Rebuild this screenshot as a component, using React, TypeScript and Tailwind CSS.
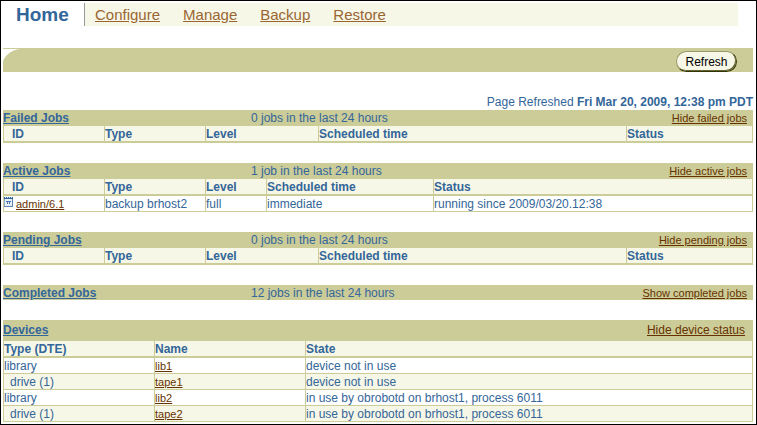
import type { ReactNode } from 'react'

type Column = {
  label: string
  width?: string
}

type SectionProps = {
  title: string
  summary?: string
  action: string
  large?: boolean
  children?: ReactNode
}

type DataTableProps = {
  label: string
  columns: Column[]
  indentFirst?: boolean
  rows?: ReactNode[][]
}

const NAV_ITEMS = ['Configure', 'Manage', 'Backup', 'Restore']

const JOB_COLUMNS: Column[] = [
  { label: 'ID', width: 'w-[100px]' },
  { label: 'Type', width: 'w-[100px]' },
  { label: 'Level', width: 'w-[112px]' },
  { label: 'Scheduled time', width: 'w-[307px]' },
  { label: 'Status' },
]

const ACTIVE_COLUMNS: Column[] = [
  { label: 'ID', width: 'w-[100px]' },
  { label: 'Type', width: 'w-[100px]' },
  { label: 'Level', width: 'w-[60px]' },
  { label: 'Scheduled time', width: 'w-[166px]' },
  { label: 'Status' },
]

const DEVICE_COLUMNS: Column[] = [
  { label: 'Type (DTE)', width: 'w-[150px]' },
  { label: 'Name', width: 'w-[150px]' },
  { label: 'State' },
]

const DEVICES = [
  { type: 'library', name: 'lib1', state: 'device not in use' },
  { type: 'drive (1)', name: 'tape1', state: 'device not in use' },
  { type: 'library', name: 'lib2', state: 'in use by obrobotd on brhost1, process 6011' },
  { type: 'drive (1)', name: 'tape2', state: 'in use by obrobotd on brhost1, process 6011' },
]

function SmallLink({ children }: { children: ReactNode }) {
  return (
    <a href="#" className="text-[11px] text-[#663300] underline">
      {children}
    </a>
  )
}

function JobIcon() {
  return (
    <svg width="9" height="11" viewBox="0 0 9 11" aria-hidden="true" shapeRendering="crispEdges">
      <path d="M0 0h9v10H0z" fill="#8fb0d4" />
      <path d="M0 0h9v2H0z" fill="#336699" />
      <path d="M1 0h1v1H1zM3 0h1v1H3zM5 0h1v1H5zM7 0h1v1H7z" fill="#cfe0f0" />
      <path d="M1 2h7v7H1z" fill="#e6eff8" />
      <path d="M2 4h5v1H2zM3 5h1v2H3zM5 5h1v2H5z" fill="#4a7ab0" />
      <path d="M8 2h1v8H0V9h8z" fill="#5f86b0" />
    </svg>
  )
}

function DataTable({ label, columns, indentFirst, rows = [] }: DataTableProps) {
  return (
    <table
      aria-label={label}
      className="w-full table-fixed border-separate border-spacing-px bg-[#cccc99] text-left text-xs leading-[14px]"
    >
      <thead>
        <tr>
          {columns.map((column, i) => (
            <th
              key={column.label}
              className={`h-4 border-b border-[#cccc99] bg-[#f7f7e7] p-0 pt-px font-bold ${column.width ?? ''} ${
                indentFirst && i === 0 ? 'pl-2' : ''
              }`}
            >
              {column.label}
            </th>
          ))}
        </tr>
      </thead>
      <tbody>
        {rows.map((row, i) => (
          <tr key={i} className="bg-white even:bg-[#f7f7e7]">
            {row.map((cell, j) => (
              <td key={j} className="h-[15px] p-0 pt-px whitespace-nowrap">
                {cell}
              </td>
            ))}
          </tr>
        ))}
      </tbody>
    </table>
  )
}

function Section({ title, summary, action, large, children }: SectionProps) {
  return (
    <section>
      <div
        className={`grid grid-cols-[248px_1fr_auto] bg-[#cccc99] text-xs leading-[14px] ${
          large ? 'h-5 items-center pr-2' : 'h-[15px] items-baseline pt-px pr-1.5'
        }`}
      >
        <h2 className="font-bold">
          <a href="#" className="underline">
            {title}
          </a>
        </h2>
        <p>{summary}</p>
        {large ? (
          <a href="#" className="text-[#663300] underline">
            {action}
          </a>
        ) : (
          <SmallLink>{action}</SmallLink>
        )}
      </div>
      {children}
    </section>
  )
}

export default function App() {
  const activeRows = [
    [
      <span className="flex items-start gap-[3px]">
        <JobIcon />
        <SmallLink>admin/6.1</SmallLink>
      </span>,
      'backup brhost2',
      'full',
      'immediate',
      'running since 2009/03/20.12:38',
    ],
  ]

  const deviceRows = DEVICES.map((device) => [
    device.type === 'library' ? device.type : <span className="pl-1.5">{device.type}</span>,
    <SmallLink>{device.name}</SmallLink>,
    device.state,
  ])

  return (
    <div className="border border-black bg-white pt-0.5 pr-[3px] pb-0.5 pl-0.5 font-['Liberation_Sans',Arial,sans-serif] text-xs text-[#336699]">
      <nav className="mr-[15px] flex h-[23px] items-stretch" aria-label="Main">
        <h1 className="flex w-[81px] items-center pl-[13px] text-[19px] font-bold">Home</h1>
        <div className="flex flex-1 items-center gap-[23px] border-l border-[#999999] bg-[#f7f7e7] pl-2.5 text-[15px] text-[#996633]">
          {NAV_ITEMS.map((item) => (
            <a key={item} href="#" className="underline">
              {item}
            </a>
          ))}
        </div>
      </nav>

      <div className="mt-[22px] flex h-6 items-end justify-between bg-[#cccc99] pr-4">
        <svg width="17" height="24" viewBox="0 0 17 24" aria-hidden="true">
          <path d="M0 1h17C9 2 3 6 0 13z" fill="#ffffff" />
        </svg>
        <button
          type="button"
          className="h-[21px] w-[61px] rounded-full border border-t-[#999966] border-r-[#333300] border-b-[#333300] border-l-[#999966] bg-[#f7f7e7] text-xs leading-4 text-black shadow-[inset_-1px_-1px_0_#666633]"
        >
          Refresh
        </button>
      </div>

      <p className="mt-[22px] text-right leading-4">
        Page Refreshed <b>Fri Mar 20, 2009, 12:38 pm PDT</b>
      </p>

      <main className="flex flex-col gap-5">
        <Section title="Failed Jobs" summary="0 jobs in the last 24 hours" action="Hide failed jobs">
          <DataTable label="Failed Jobs" columns={JOB_COLUMNS} indentFirst />
        </Section>
        <Section title="Active Jobs" summary="1 job in the last 24 hours" action="Hide active jobs">
          <DataTable label="Active Jobs" columns={ACTIVE_COLUMNS} indentFirst rows={activeRows} />
        </Section>
        <Section title="Pending Jobs" summary="0 jobs in the last 24 hours" action="Hide pending jobs">
          <DataTable label="Pending Jobs" columns={JOB_COLUMNS} indentFirst />
        </Section>
        <Section title="Completed Jobs" summary="12 jobs in the last 24 hours" action="Show completed jobs" />
        <Section title="Devices" action="Hide device status" large>
          <DataTable label="Devices" columns={DEVICE_COLUMNS} rows={deviceRows} />
        </Section>
      </main>
    </div>
  )
}
